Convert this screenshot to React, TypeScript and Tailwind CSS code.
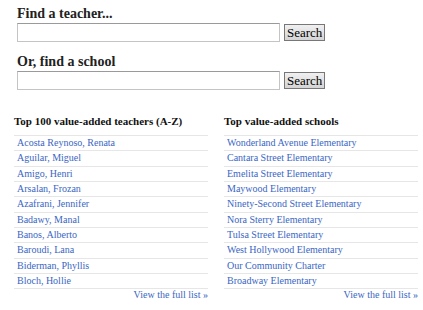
import React from 'react';

const teachers = [
  'Acosta Reynoso, Renata',
  'Aguilar, Miguel',
  'Amigo, Henri',
  'Arsalan, Frozan',
  'Azafrani, Jennifer',
  'Badawy, Manal',
  'Banos, Alberto',
  'Baroudi, Lana',
  'Biderman, Phyllis',
  'Bloch, Hollie',
];

const schools = [
  'Wonderland Avenue Elementary',
  'Cantara Street Elementary',
  'Emelita Street Elementary',
  'Maywood Elementary',
  'Ninety-Second Street Elementary',
  'Nora Sterry Elementary',
  'Tulsa Street Elementary',
  'West Hollywood Elementary',
  'Our Community Charter',
  'Broadway Elementary',
];

function SearchBox({ label }: { label: string }) {
  return (
    <div>
      <h2 className="text-[14px] font-bold leading-[16px] text-[#222]">{label}</h2>
      <div className="mt-[1px] flex items-center gap-[4px]">
        <input className="h-[19px] w-[263px] border border-[#c4c4c4] border-t-[#9a9a9a] bg-white" />
        <button className="h-[17px] border border-[#777] bg-gradient-to-b from-[#f0f0f0] to-[#d4d4d4] px-[2px] text-[13px] leading-[15px] text-black font-['Liberation_Serif',serif]">
          Search
        </button>
      </div>
    </div>
  );
}

function TopList({ title, items }: { title: string; items: string[] }) {
  return (
    <div className="w-[194px] shrink-0">
      <h3 className="pb-[7px] text-[11px] font-bold leading-[14px] text-[#111]">{title}</h3>
      <ul className="border-t border-[#e6e6e6]">
        {items.map((item) => (
          <li key={item} className="h-[15.35px] border-b border-[#e6e6e6] px-[3px] text-[10px] leading-[14px] text-[#3a66c4]">
            {item}
          </li>
        ))}
      </ul>
      <div className="-mt-[1px] text-right text-[10px] leading-[13px] text-[#3a66c4]">View the full list »</div>
    </div>
  );
}

export default function App() {
  return (
    <div className="min-h-screen bg-white font-['Liberation_Serif',serif]">
      <div className="flex flex-col gap-[12px] px-[17px] pt-[6px]">
        <SearchBox label="Find a teacher..." />
        <SearchBox label="Or, find a school" />
      </div>
      <div className="mt-[24px] flex gap-[16px] pl-[14px]">
        <TopList title="Top 100 value-added teachers (A-Z)" items={teachers} />
        <TopList title="Top value-added schools" items={schools} />
      </div>
    </div>
  );
}
